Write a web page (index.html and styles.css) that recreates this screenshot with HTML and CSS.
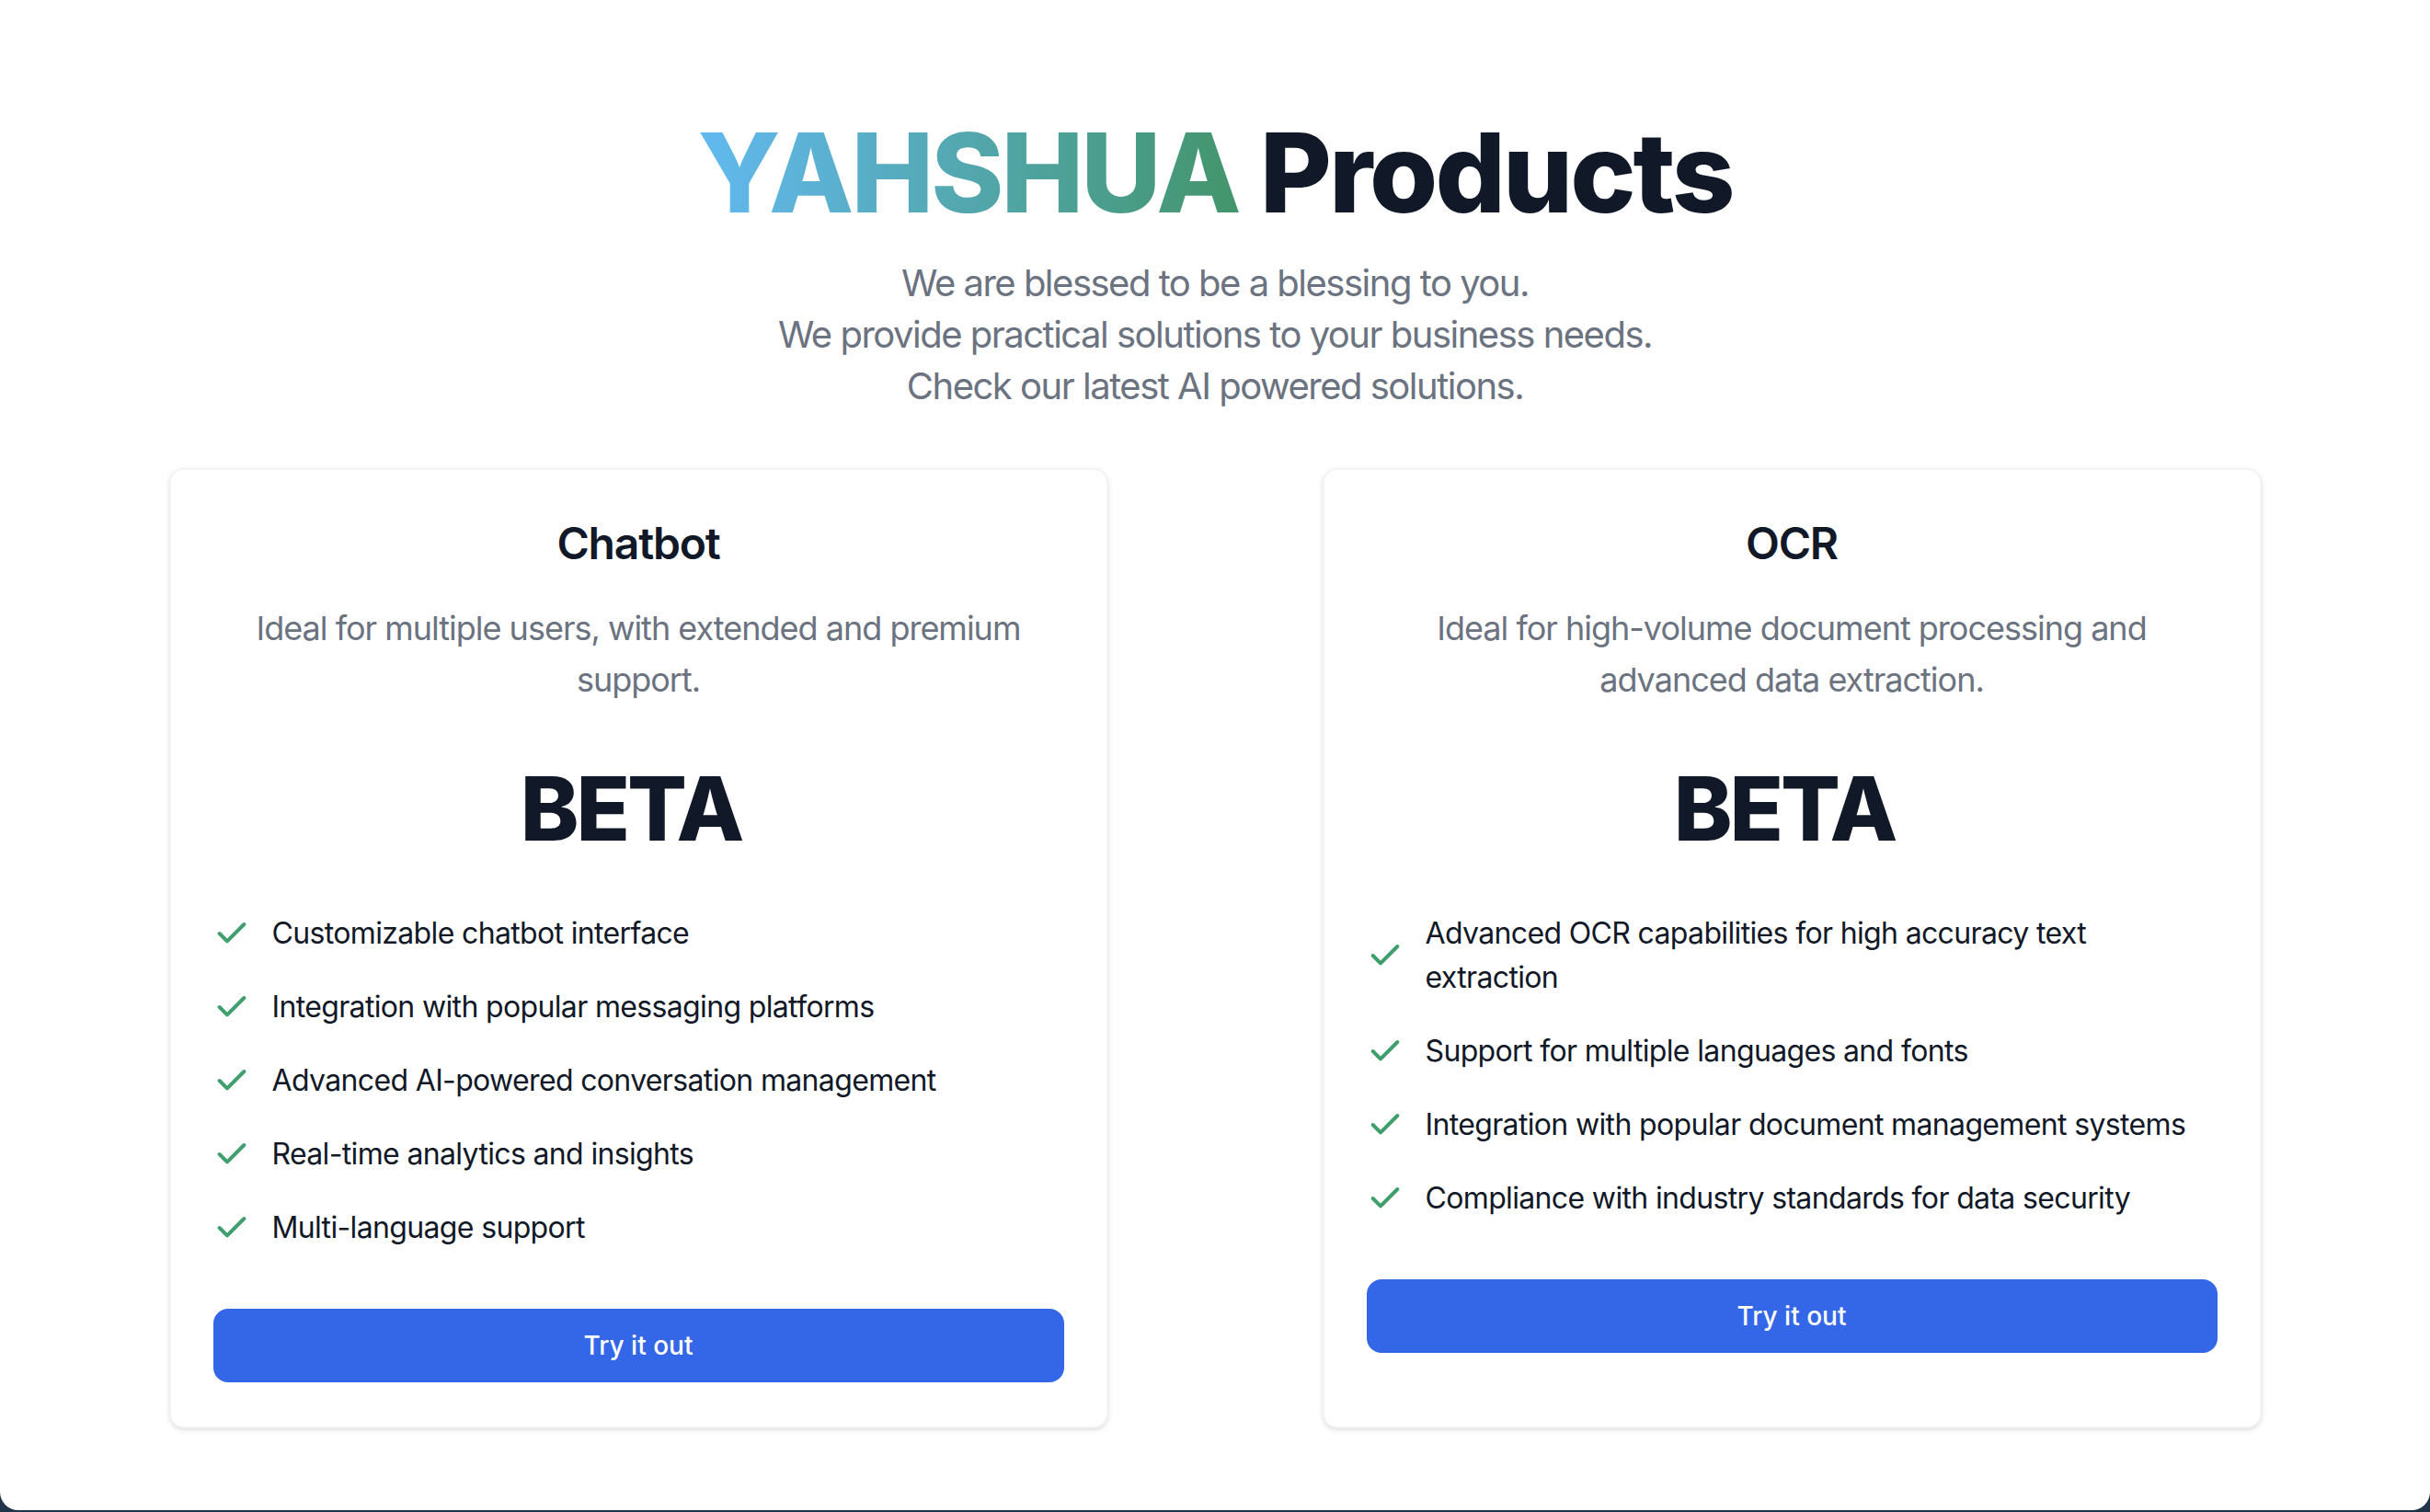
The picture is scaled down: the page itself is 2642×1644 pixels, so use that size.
FILE: index.html
```html
<!DOCTYPE html>
<html lang="en">
<head>
<meta charset="utf-8">
<title>YAHSHUA Products</title>
<link rel="stylesheet" href="styles.css">
</head>
<body>
<div class="window">
  <section class="pricing">
    <div class="intro">
      <h2 class="title"><span class="brand">YAHSHUA</span> Products</h2>
      <p class="lead">We are blessed to be a blessing to you.<br>We provide practical solutions to your business needs.<br>Check our latest AI powered solutions.</p>
    </div>
    <div class="cards">
      <div class="card">
        <h3 class="card-title">Chatbot</h3>
        <p class="card-desc">Ideal for multiple users, with extended and premium support.</p>
        <div class="price"><span class="price-value">BETA</span></div>
        <ul class="features">
          <li class="feature"><svg class="check" viewBox="0 0 24 24" fill="none" stroke="currentColor" stroke-width="2.4" stroke-linecap="round" stroke-linejoin="round"><path d="M20 6 9 17l-5-5"/></svg><span>Customizable chatbot interface</span></li>
          <li class="feature"><svg class="check" viewBox="0 0 24 24" fill="none" stroke="currentColor" stroke-width="2.4" stroke-linecap="round" stroke-linejoin="round"><path d="M20 6 9 17l-5-5"/></svg><span>Integration with popular messaging platforms</span></li>
          <li class="feature"><svg class="check" viewBox="0 0 24 24" fill="none" stroke="currentColor" stroke-width="2.4" stroke-linecap="round" stroke-linejoin="round"><path d="M20 6 9 17l-5-5"/></svg><span>Advanced AI-powered conversation management</span></li>
          <li class="feature"><svg class="check" viewBox="0 0 24 24" fill="none" stroke="currentColor" stroke-width="2.4" stroke-linecap="round" stroke-linejoin="round"><path d="M20 6 9 17l-5-5"/></svg><span>Real-time analytics and insights</span></li>
          <li class="feature"><svg class="check" viewBox="0 0 24 24" fill="none" stroke="currentColor" stroke-width="2.4" stroke-linecap="round" stroke-linejoin="round"><path d="M20 6 9 17l-5-5"/></svg><span>Multi-language support</span></li>
        </ul>
        <a class="btn" href="#">Try it out</a>
      </div>
      <div class="card">
        <h3 class="card-title">OCR</h3>
        <p class="card-desc">Ideal for high-volume document processing and advanced data extraction.</p>
        <div class="price"><span class="price-value">BETA</span></div>
        <ul class="features">
          <li class="feature"><svg class="check" viewBox="0 0 24 24" fill="none" stroke="currentColor" stroke-width="2.4" stroke-linecap="round" stroke-linejoin="round"><path d="M20 6 9 17l-5-5"/></svg><span>Advanced OCR capabilities for high accuracy text extraction</span></li>
          <li class="feature"><svg class="check" viewBox="0 0 24 24" fill="none" stroke="currentColor" stroke-width="2.4" stroke-linecap="round" stroke-linejoin="round"><path d="M20 6 9 17l-5-5"/></svg><span>Support for multiple languages and fonts</span></li>
          <li class="feature"><svg class="check" viewBox="0 0 24 24" fill="none" stroke="currentColor" stroke-width="2.4" stroke-linecap="round" stroke-linejoin="round"><path d="M20 6 9 17l-5-5"/></svg><span>Integration with popular document management systems</span></li>
          <li class="feature"><svg class="check" viewBox="0 0 24 24" fill="none" stroke="currentColor" stroke-width="2.4" stroke-linecap="round" stroke-linejoin="round"><path d="M20 6 9 17l-5-5"/></svg><span>Compliance with industry standards for data security</span></li>
        </ul>
        <a class="btn" href="#">Try it out</a>
      </div>
    </div>
  </section>
</div>
</body>
</html>
```
FILE: styles.css
```css
* {
  box-sizing: border-box;
}

html, body {
  margin: 0;
  padding: 0;
}

body {
  background: #1e3549;
  font-family: "Inter", "Noto Sans", "Liberation Sans", sans-serif;
  color: #111827;
  height: 1644px;
  overflow: hidden;
}

.window {
  height: 1642px;
  background: #ffffff;
  border-radius: 0 0 20px 20px;
  overflow: hidden;
}

.pricing {
  padding: 128px 0 128px;
}

.intro {
  text-align: center;
  margin-bottom: 61px;
}

.title {
  margin: 0 0 32px;
  font-size: 120px;
  line-height: 120px;
  font-weight: 800;
  letter-spacing: -3px;
  color: #111827;
}

.brand {
  background: linear-gradient(to right, #62b9f0, #43956b);
  -webkit-background-clip: text;
  background-clip: text;
  color: transparent;
}

.lead {
  margin: 0;
  font-size: 40px;
  line-height: 56px;
  letter-spacing: -1.5px;
  color: #6b7280;
  font-weight: 400;
}

.cards {
  display: grid;
  grid-template-columns: repeat(2, 1021px);
  column-gap: 233px;
  justify-content: center;
}

.card {
  display: flex;
  flex-direction: column;
  text-align: center;
  background: #ffffff;
  border: 2px solid #f3f4f6;
  border-radius: 16px;
  padding: 48px 46px;
  box-shadow: 0 2px 6px 0 rgba(0, 0, 0, 0.1), 0 2px 4px -2px rgba(0, 0, 0, 0.1);
}

.card-title {
  margin: 0 0 32px;
  font-size: 48px;
  line-height: 64px;
  font-weight: 600;
  letter-spacing: -1.2px;
  color: #111827;
}

.card-desc {
  margin: 0;
  font-size: 36px;
  line-height: 56px;
  letter-spacing: -1px;
  color: #6b7280;
}

.price {
  display: flex;
  justify-content: center;
  align-items: baseline;
  margin: 64px 0;
}

.price-value {
  margin-right: 16px;
  font-size: 96px;
  line-height: 96px;
  font-weight: 800;
  letter-spacing: -3px;
  color: #111827;
}

.features {
  list-style: none;
  margin: 0 0 64px;
  padding: 0;
  text-align: left;
  display: flex;
  flex-direction: column;
  gap: 32px;
}

.feature {
  display: flex;
  align-items: center;
  gap: 24px;
  font-size: 32px;
  line-height: 48px;
  letter-spacing: -0.65px;
  color: #111827;
}

.check {
  flex-shrink: 0;
  width: 40px;
  height: 40px;
  color: #3f9f6c;
}

.btn {
  display: block;
  background: #3466e8;
  color: #ffffff;
  text-decoration: none;
  font-size: 28px;
  line-height: 40px;
  font-weight: 500;
  padding: 20px 40px;
  border-radius: 16px;
  text-align: center;
}
```
